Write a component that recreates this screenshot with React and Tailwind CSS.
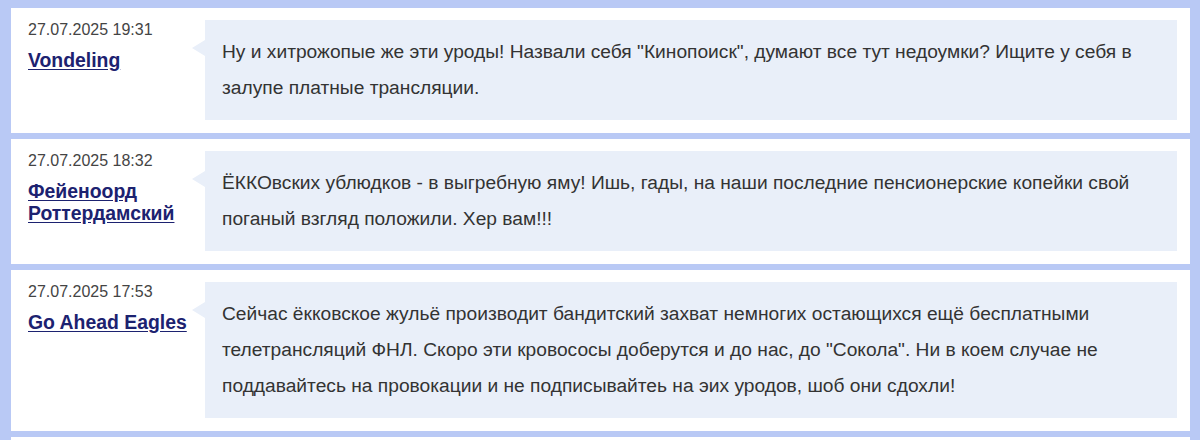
import React from 'react';

const comments = [
  {
    date: '27.07.2025 19:31',
    author: 'Vondeling',
    text: 'Ну и хитрожопые же эти уроды! Назвали себя "Кинопоиск", думают все тут недоумки? Ищите у себя в залупе платные трансляции.',
  },
  {
    date: '27.07.2025 18:32',
    author: 'Фейеноорд Роттердамский',
    text: 'ЁККОвских ублюдков - в выгребную яму! Ишь, гады, на наши последние пенсионерские копейки свой поганый взгляд положили. Хер вам!!!',
  },
  {
    date: '27.07.2025 17:53',
    author: 'Go Ahead Eagles',
    text: 'Сейчас ёкковское жульё производит бандитский захват немногих остающихся ещё бесплатными телетрансляций ФНЛ. Скоро эти кровососы доберутся и до нас, до "Сокола". Ни в коем случае не поддавайтесь на провокации и не подписывайтеь на эих уродов, шоб они сдохли!',
  },
];

function Comment({ date, author, text }) {
  return (
    <div className="flex bg-white pl-[17px] pr-[13px] pt-3 pb-[13px]">
      <div className="mr-[13px] w-[164px] shrink-0">
        <div className="text-[16px] leading-[19px] text-[#444]">{date}</div>
        <a
          href="#"
          className="mt-[10px] block text-[19.4px] font-bold leading-[22px] text-[#1c2270] underline underline-offset-2"
        >
          {author}
        </a>
      </div>
      <div className="relative flex-1 bg-[#e9eff9] px-[17px] py-[14px]">
        {/* bubble arrow */}
        <div className="absolute left-[-13px] top-[20px] h-0 w-0 border-y-[8px] border-r-[13px] border-y-transparent border-r-[#e9eff9]" />
        <p className="text-[19.2px] leading-[36px] text-[#333]">{text}</p>
      </div>
    </div>
  );
}

export default function App() {
  return (
    <div
      className="min-h-[440px] bg-[#b9c9f5] pl-[11px] pr-[10px] pt-2"
      style={{ fontFamily: '"Liberation Sans", Arial, sans-serif' }}
    >
      <div className="flex flex-col gap-[6px]">
        {comments.map((c) => (
          <Comment key={c.date} {...c} />
        ))}
        <div className="h-[40px] bg-white" />
      </div>
    </div>
  );
}
